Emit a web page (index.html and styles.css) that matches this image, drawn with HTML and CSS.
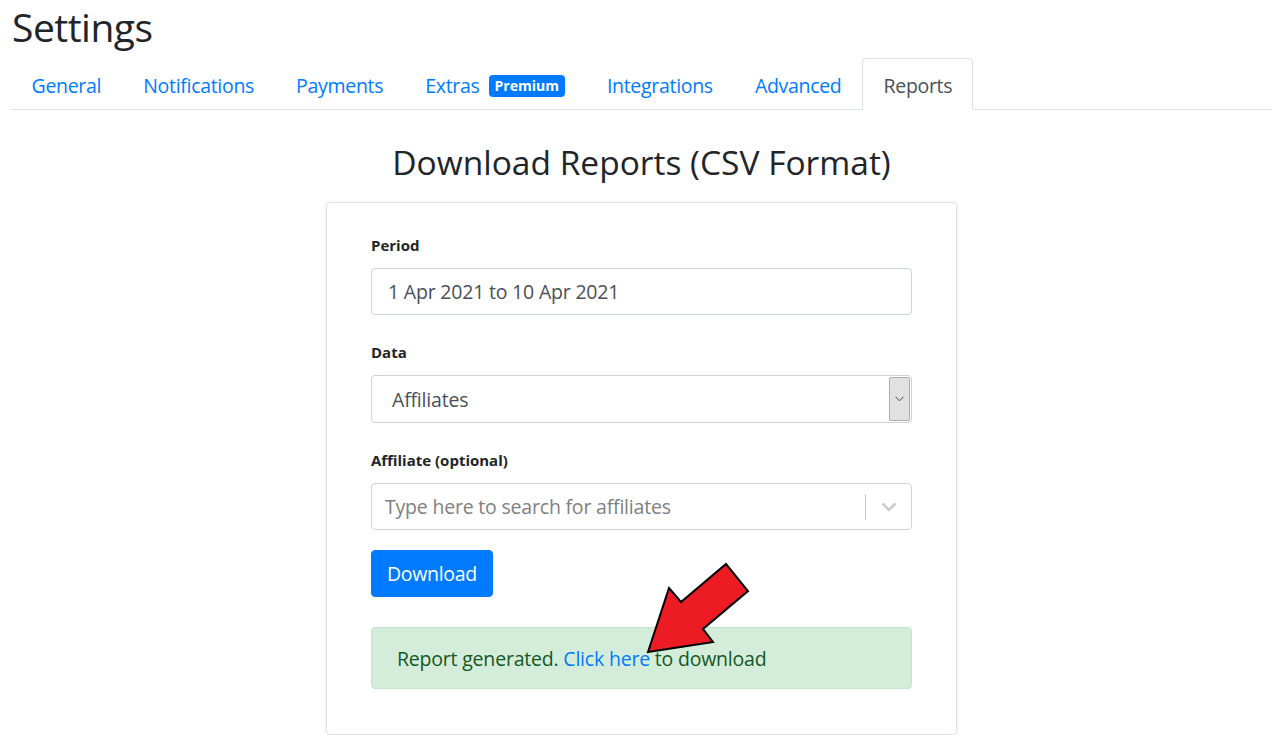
FILE: index.html
```html
<!DOCTYPE html>
<html>
<head>
<meta charset="utf-8">
<title>Settings</title>
<link rel="stylesheet" href="styles.css">
</head>
<body>
<div class="page">
  <h1 class="title">Settings</h1>
  <nav class="tabs">
    <a class="tab" href="#">General</a>
    <a class="tab" href="#">Notifications</a>
    <a class="tab" href="#">Payments</a>
    <a class="tab" href="#">Extras <span class="badge">Premium</span></a>
    <a class="tab" href="#">Integrations</a>
    <a class="tab" href="#">Advanced</a>
    <a class="tab active" href="#">Reports</a>
  </nav>
  <h2 class="heading">Download Reports (CSV Format)</h2>
  <div class="card">
    <div class="group">
      <label class="label">Period</label>
      <div class="control">1 Apr 2021 to 10 Apr 2021</div>
    </div>
    <div class="group">
      <label class="label">Data</label>
      <div class="control select">
        <span class="select-text">Affiliates</span>
        <span class="select-btn">
          <svg width="9" height="6" viewBox="0 0 9 6"><path d="M0.5 0.8 L4.5 4.8 L8.5 0.8" fill="none" stroke="#444" stroke-width="1"/></svg>
        </span>
      </div>
    </div>
    <div class="group">
      <label class="label">Affiliate (optional)</label>
      <div class="control search">
        <span class="placeholder">Type here to search for affiliates</span>
        <span class="sep"></span>
        <span class="chev">
          <svg width="16" height="10" viewBox="0 0 16 10"><path d="M1.5 1.5 L8 8 L14.5 1.5" fill="none" stroke="#ccc" stroke-width="2.6"/></svg>
        </span>
      </div>
    </div>
    <button class="btn">Download</button>
    <div class="alert">Report generated. <a href="#">Click here</a> to download</div>
  </div>
</div>
<svg class="arrow" width="115" height="105" viewBox="0 0 115 105">
  <polygon points="8,97 29,33 41,47 86,9 108,36 63,74 73,87" fill="#ed1c24" stroke="#000" stroke-width="2" stroke-linejoin="miter"/>
</svg>
</body>
</html>
```
FILE: styles.css
```css
* { box-sizing: border-box; }
html, body { margin: 0; padding: 0; background: #fff; }
body {
  font-family: "Open Sans", "Noto Sans", sans-serif;
  color: #212529;
}
.page {
  padding: 0 4px 0 10px;
}
.title {
  margin: 3px 0 7px 2px;
  font-size: 39px;
  letter-spacing: -0.5px;
  font-weight: 400;
  line-height: 48px;
}
.tabs {
  display: flex;
  border-bottom: 1px solid #dee2e6;
  margin-right: 2px;
}
.tab {
  display: flex;
  align-items: center;
  padding: 12px 19.5px 8px 20.5px;
  line-height: 30px;
  font-size: 19.5px;
  letter-spacing: -0.3px;
  color: #007bff;
  text-decoration: none;
  border: 1px solid transparent;
  border-top-left-radius: 4px;
  border-top-right-radius: 4px;
  margin-bottom: -1px;
}
.tab.active {
  color: #495057;
  background: #fff;
  border-color: #dee2e6 #dee2e6 #fff;
}
.badge {
  display: inline-block;
  margin-left: 9px;
  background: #007bff;
  color: #fff;
  font-size: 14px;
  letter-spacing: 0;
  font-weight: 700;
  line-height: 22px;
  padding: 0 6px;
  border-radius: 4px;
}
.heading {
  margin: 32px 0 20px;
  text-align: center;
  font-size: 33.5px;
  font-weight: 400;
  line-height: 40px;
}
.card {
  width: 631px;
  margin: 0 auto;
  border: 1px solid #dee2e6;
  border-radius: 4px;
  box-shadow: 0 1px 4px rgba(0,0,0,0.08);
  padding: 31px 44px 45px;
}
.group { margin-bottom: 26px; }
.group:nth-child(3) { margin-bottom: 20px; }
.label {
  display: block;
  font-size: 15px;
  font-weight: 700;
  line-height: 22px;
  margin-bottom: 12px;
}
.control {
  display: flex;
  align-items: center;
  height: 47px;
  border: 1px solid #ced4da;
  border-radius: 4px;
  padding: 0 16px;
  font-size: 19.5px;
  letter-spacing: -0.2px;
  color: #495057;
}
.select {
  height: 48px;
  padding: 0 1px 0 20px;
  justify-content: space-between;
}
.select-btn {
  width: 21px;
  height: 44px;
  background: #e1e1e1;
  border: 1px solid #adadad;
  border-radius: 2px;
  display: flex;
  align-items: center;
  justify-content: center;
}
.search {
  padding: 0 0 0 13px;
}
.placeholder {
  flex: 1;
  color: #808080;
}
.sep {
  width: 1px;
  height: 26px;
  background: #ccc;
}
.chev {
  width: 45px;
  display: flex;
  justify-content: center;
}
.btn {
  display: block;
  height: 47px;
  padding: 0 15px;
  border: 1px solid #007bff;
  border-radius: 4px;
  background: #007bff;
  color: #fff;
  font-family: inherit;
  font-size: 19.5px;
  letter-spacing: -0.3px;
  margin-bottom: 30px;
}
.alert {
  height: 62px;
  display: flex;
  align-items: center;
  padding: 0 25px;
  background: #d4edda;
  border: 1px solid #c3e6cb;
  border-radius: 4px;
  color: #155724;
  font-size: 19.5px;
  letter-spacing: -0.2px;
  white-space: pre;
}
.alert a { color: #007bff; text-decoration: none; }
.arrow {
  position: absolute;
  left: 640px;
  top: 555px;
}
```
